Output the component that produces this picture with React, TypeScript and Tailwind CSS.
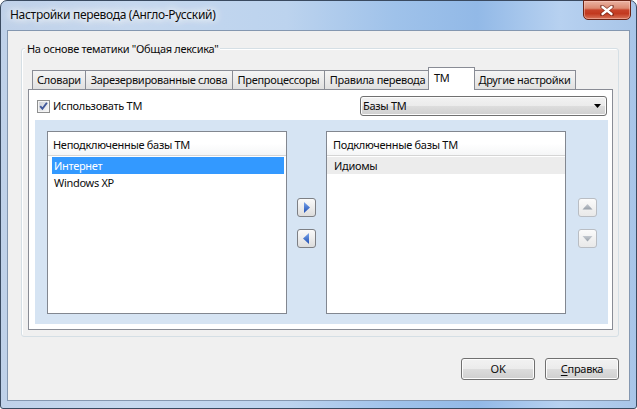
import React from "react";

function CloseButton() {
  return (
    <div className="w-[48px] h-[20px] -mt-[1px] rounded-b-[5px] border border-[#6a2416] bg-[linear-gradient(180deg,#eab3a3_0%,#dc8a72_40%,#c7432a_50%,#c2391f_70%,#d8745a_100%)] shadow-[inset_0_0_0_1px_rgba(255,210,200,0.45)] flex items-center justify-center">
      <svg width="14" height="11" viewBox="0 0 14 11">
        <path d="M2 1.5 L12 9.5 M12 1.5 L2 9.5" stroke="#5a1a10" strokeWidth="4" strokeLinecap="round" fill="none" opacity="0.55" />
        <path d="M2.5 2 L11.5 9 M11.5 2 L2.5 9" stroke="#ffffff" strokeWidth="2.3" strokeLinecap="round" fill="none" />
      </svg>
    </div>
  );
}

function CheckBox() {
  return (
    <svg width="13" height="13" viewBox="0 0 13 13">
      <defs>
        <linearGradient id="cbg" x1="0" y1="0" x2="1" y2="1">
          <stop offset="0" stopColor="#cdd1d8" />
          <stop offset="1" stopColor="#f7f7f7" />
        </linearGradient>
      </defs>
      <rect x="0.5" y="0.5" width="12" height="12" fill="#f4f4f4" stroke="#8e8f8f" />
      <rect x="2" y="2" width="9" height="9" fill="url(#cbg)" />
      <path d="M3.2 6.2 L5.4 8.8 L9.9 2.8" stroke="#40589a" strokeWidth="1.9" fill="none" />
    </svg>
  );
}

function ArrowButton({ dir, disabled }: { dir: "left" | "right" | "up" | "down"; disabled?: boolean }) {
  const pts: Record<string, string> = {
    right: "7,4 13,9.5 7,15",
    left: "12,4 6,9.5 12,15",
    up: "4.5,11.5 9.5,6 14.5,11.5",
    down: "4.5,7 9.5,12.5 14.5,7",
  };
  return (
    <div
      className={
        disabled
          ? "w-[19px] h-[19px] rounded-[3px] border border-[#b9bdc3] bg-[linear-gradient(180deg,#fbfbfb_0%,#f1f1f1_50%,#e9e9e9_100%)]"
          : "w-[19px] h-[19px] rounded-[3px] border border-[#7d7f84] bg-[linear-gradient(180deg,#fafafa_0%,#ececec_50%,#dcdcdc_100%)]"
      }
    >
      <svg width="17" height="17" viewBox="1 1 17 17">
        <defs>
          <linearGradient id={"ag" + dir} x1="0" y1="0" x2="0" y2="1">
            <stop offset="0" stopColor={disabled ? "#c4c9d0" : "#7aa6ec"} />
            <stop offset="1" stopColor={disabled ? "#98a0aa" : "#1f4db3"} />
          </linearGradient>
        </defs>
        <polygon points={pts[dir]} fill={"url(#ag" + dir + ")"} />
      </svg>
    </div>
  );
}

function WinButton({ children }: { children: React.ReactNode }) {
  return (
    <div className="w-[74px] h-[22px] rounded-[3px] border border-[#707070] bg-[linear-gradient(180deg,#f2f2f2_0%,#ebebeb_50%,#dddddd_50%,#cfcfcf_100%)] shadow-[inset_0_0_0_1px_#fcfcfc] flex items-center justify-center leading-[16px]">
      {children}
    </div>
  );
}

export default function App() {
  const tabBase =
    "h-[19px] border-t border-l border-[#898c95] bg-[linear-gradient(180deg,#f4f4f4_0%,#ebebeb_50%,#e0e0e0_100%)] flex items-center justify-center leading-[16px] shrink-0 whitespace-nowrap";
  return (
    <div className="w-[637px] h-[409px] bg-white font-['Noto_Sans',sans-serif] text-[11px] tracking-[-0.3px] text-[#0c0c0c] leading-[16px]">
      <div className="w-full h-full flex flex-col border border-[#3a4a60] rounded-t-[7px] rounded-b-[3px] bg-[linear-gradient(90deg,#bfd1e9_0%,#c6d8ee_20%,#bcd3ee_45%,#9fc2ea_62%,#92b9e7_75%,#b7d1f0_88%,#a8c5e8_100%)]">
        {/* Title bar */}
        <div className="h-[29px] shrink-0 flex items-start justify-between pl-[9px] pr-[5px]">
          <span className="mt-[6px] text-[12px] leading-[16px] [text-shadow:0_0_6px_#ffffff,0_0_10px_#ffffff,0_0_14px_#ffffff]">
            Настройки перевода (Англо-Русский)
          </span>
          <CloseButton />
        </div>

        {/* Client area */}
        <div className="mx-[6px] h-[371px] shrink-0 border border-[#8497b0] bg-[#f0f0f0] flex flex-col pt-[17px] pl-[13px] pr-[10px]">
          {/* Group box */}
          <div className="relative w-[598px] h-[289px] border border-[#d5dfe5] rounded-[3px] shadow-[inset_1px_1px_0_#ffffff] pt-[18px] pl-[6px] pr-[5px] pb-[6px] flex flex-col">
            <span className="absolute left-[3px] top-[-8px] px-[2px] bg-[#f0f0f0] leading-[16px]">
              На основе тематики "Общая лексика"
            </span>

            {/* Tab strip */}
            <div className="h-[22px] flex items-end pl-[4px]">
              <div className={tabBase + " w-[53px]"}>Словари</div>
              <div className={tabBase + " w-[147px]"}>Зарезервированные слова</div>
              <div className={tabBase + " w-[92px]"}>Препроцессоры</div>
              <div className={tabBase + " w-[106px]"}>Правила перевода</div>
              <div className="relative z-10 w-[47px] h-[23px] -mx-[2px] -mb-[1px] border border-b-0 border-[#898c95] bg-white flex items-start justify-start pl-[5px] pt-[2px] leading-[16px] shrink-0">
                ТМ
              </div>
              <div className={tabBase + " w-[103px] border-r"}>Другие настройки</div>
            </div>

            {/* Tab page */}
            <div className="w-[585px] h-[241px] border border-[#898c95] bg-white flex flex-col pt-[6px] pl-[6px] pr-[4px]">
              <div className="h-[20px] flex items-center justify-between pl-[2px] pr-[1px]">
                <div className="flex items-center">
                  <CheckBox />
                  <span className="ml-[3px]">Использовать ТМ</span>
                </div>
                <div className="w-[247px] h-[20px] rounded-[3px] border border-[#707070] bg-[linear-gradient(180deg,#f2f2f2_0%,#ebebeb_50%,#dddddd_50%,#cfcfcf_100%)] shadow-[inset_0_0_0_1px_#fcfcfc] flex items-center justify-between pl-[2px] pr-[5px]">
                  <span>Базы ТМ</span>
                  <svg width="7" height="4" viewBox="0 0 7 4">
                    <polygon points="0,0 7,0 3.5,4" fill="#000" />
                  </svg>
                </div>
              </div>

              {/* Blue panel */}
              <div className="mt-[4px] h-[204px] bg-[#d6e4f3] flex pt-[11px] pl-[12px]">
                {/* Left list */}
                <div className="w-[240px] h-[183px] border border-[#828790] bg-white flex flex-col shrink-0">
                  <div className="h-[24px] border-b border-[#d5d5d5] bg-[linear-gradient(180deg,#ffffff_0%,#ffffff_50%,#f5f6f7_100%)] flex items-center pl-[5px] pt-[2px]">
                    Неподключенные базы ТМ
                  </div>
                  <div className="mt-[1px] h-[17px] ml-[4px] mr-[2px] bg-[#3399ff] text-white flex items-center pl-[2px]">
                    Интернет
                  </div>
                  <div className="h-[17px] flex items-center pl-[6px]">Windows XP</div>
                </div>

                {/* Middle buttons */}
                <div className="w-[39px] h-[183px] flex flex-col items-center justify-center gap-[12px] shrink-0">
                  <ArrowButton dir="right" />
                  <ArrowButton dir="left" />
                </div>

                {/* Right list */}
                <div className="w-[240px] h-[183px] border border-[#828790] bg-white flex flex-col shrink-0">
                  <div className="h-[24px] border-b border-[#d5d5d5] bg-[linear-gradient(180deg,#ffffff_0%,#ffffff_50%,#f5f6f7_100%)] flex items-center pl-[6px] pt-[2px]">
                    Подключенные базы ТМ
                  </div>
                  <div className="mt-[1px] h-[17px] bg-[#ececec] flex items-center pl-[7px]">Идиомы</div>
                </div>

                {/* Up / down */}
                <div className="w-[42px] h-[183px] flex flex-col items-center justify-center gap-[12px] shrink-0">
                  <ArrowButton dir="up" disabled />
                  <ArrowButton dir="down" disabled />
                </div>
              </div>
            </div>
          </div>

          {/* Bottom buttons */}
          <div className="mt-[21px] flex justify-end gap-[10px]">
            <WinButton>OK</WinButton>
            <WinButton>
              <span>
                <span className="underline underline-offset-2">С</span>правка
              </span>
            </WinButton>
          </div>
        </div>
      </div>
    </div>
  );
}
